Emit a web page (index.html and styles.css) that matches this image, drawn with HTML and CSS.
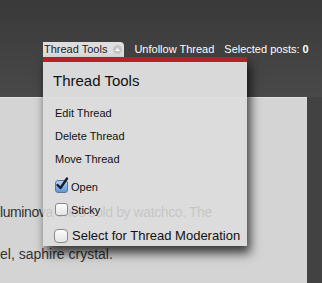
FILE: index.html
```html
<!DOCTYPE html>
<html lang="en">
<head>
    <meta charset="UTF-8">
    <title>Thread Tools</title>
    <link rel="stylesheet" href="styles.css">
</head>
<body>
    <div class="header">
        <div class="toolbar">
            <div class="tab">Thread Tools <span class="tab-icon"><svg width="9" height="9" viewBox="0 0 9 9"><path d="M2 6 L4.5 3 L7 6 Z" fill="#fff"/></svg></span></div>
            <span class="link">Unfollow Thread</span>
            <span class="link">Selected posts: <b>0</b></span>
        </div>
    </div>

    <div class="content">
        <p class="line1">luminova ones sold by watchco. The</p>
        <p class="line2">el, saphire crystal.</p>
    </div>

    <div class="menu">
        <div class="menu-title">Thread Tools</div>
        <ul class="menu-list">
            <li>Edit Thread</li>
            <li>Delete Thread</li>
            <li>Move Thread</li>
            <li class="check"><span class="box checked"><svg width="15" height="15" viewBox="0 0 15 15"><path d="M2.5 8 L5.5 11 L12 1.5" fill="none" stroke="#1a1a2a" stroke-width="2.3" stroke-linecap="round" stroke-linejoin="round"/></svg></span>Open</li>
            <li class="check"><span class="box"></span>Sticky</li>
            <li class="check big"><span class="box"></span>Select for Thread Moderation</li>
        </ul>
    </div>
</body>
</html>
```

FILE: styles.css
```css
body {
    margin: 0;
    width: 322px;
    height: 283px;
    overflow: hidden;
    background: #424242;
    font-family: "Liberation Sans", Arial, sans-serif;
    position: relative;
}
.header {
    height: 97px;
    background: linear-gradient(#393939, #494949);
    display: flex;
    flex-direction: column;
    justify-content: flex-end;
}
.toolbar {
    display: flex;
    align-items: flex-end;
    padding-left: 43px;
    height: 15px;
    margin-bottom: 40px;
    font-size: 11px;
    white-space: nowrap;
}
.tab {
    background: #dedede;
    color: #222;
    height: 15px;
    line-height: 15px;
    padding: 0 2px 0 1px;
    border-radius: 0 4px 0 0;
    display: flex;
    align-items: center;
    gap: 6px;
}
.tab-icon {
    width: 9px;
    height: 9px;
    border-radius: 50%;
    background: #c4c4c4;
    display: flex;
}
.link {
    color: #fff;
    margin-left: 10px;
    line-height: 15px;
}
.content {
    width: 307px;
    height: 186px;
    background: #d4d4d4;
    border-top: 1px solid #e6e6e6;
    color: #333;
    font-size: 14px;
    padding-top: 106px;
    box-sizing: border-box;
}
.content p {
    margin: 0;
    line-height: 16px;
}
.line1 {
    margin-bottom: 26px !important;
    letter-spacing: -0.4px;
}
.menu {
    position: absolute;
    left: 43px;
    top: 57px;
    width: 204px;
    height: 189px;
    box-sizing: border-box;
    border-top: 5px solid #b3212a;
    box-shadow: 3px 7px 10px rgba(0, 0, 0, 0.75);
    color: #111;
}
.menu-title {
    font-size: 15px;
    padding: 10px 0 0 10px;
    height: 35px;
    box-sizing: border-box;
    background: #d9d9d9;
}
.menu-list {
    list-style: none;
    margin: 0;
    padding: 9px 0 0 12px;
    font-size: 11px;
    height: 149px;
    box-sizing: border-box;
    background: rgba(221, 221, 221, 0.86);
}
.menu-list li {
    height: 23px;
    line-height: 14px;
}
.check {
    display: flex;
    align-items: center;
}
.box {
    width: 11px;
    height: 11px;
    border: 1px solid #8a8a8a;
    border-radius: 3px;
    background: linear-gradient(#fdfdfd, #e4e4e4);
    margin-right: 3px;
    position: relative;
}
.box.checked {
    background: linear-gradient(#b3d0f0, #5d97dc);
    border-color: #5a77a0;
}
.box svg {
    position: absolute;
    left: -1px;
    top: -4px;
}
.menu-list .big {
    font-size: 13px;
    height: 30px;
}
.big .box {
    width: 12px;
    height: 12px;
    border-radius: 4px;
    margin-left: -1px;
    margin-right: 4px;
}
```
